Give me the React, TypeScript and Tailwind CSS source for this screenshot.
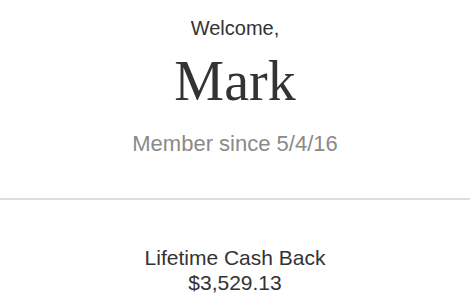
export default function App() {
  return (
    <div className="w-[470px] bg-white" style={{ fontFamily: '"Liberation Sans", Arial, sans-serif' }}>
      <div className="flex flex-col items-center pt-[16px] pb-[41px]">
        <div className="text-[20px] leading-[24px] text-[#333]">Welcome,</div>
        <div className="mt-[11px] text-[56px] leading-[60px] text-[#333] font-['Liberation_Serif',serif]">Mark</div>
        <div className="mt-[20px] text-[22px] leading-[26px] text-[#8a8a8a]">Member since 5/4/16</div>
      </div>
      <div className="h-[2px] bg-[#dcdcdc]" />
      <div className="flex flex-col items-center pt-[45px]">
        <div className="text-[21px] leading-[25px] text-[#333]">Lifetime Cash Back</div>
        <div className="text-[21px] leading-[25px] text-[#333]">$3,529.13</div>
      </div>
    </div>
  );
}
